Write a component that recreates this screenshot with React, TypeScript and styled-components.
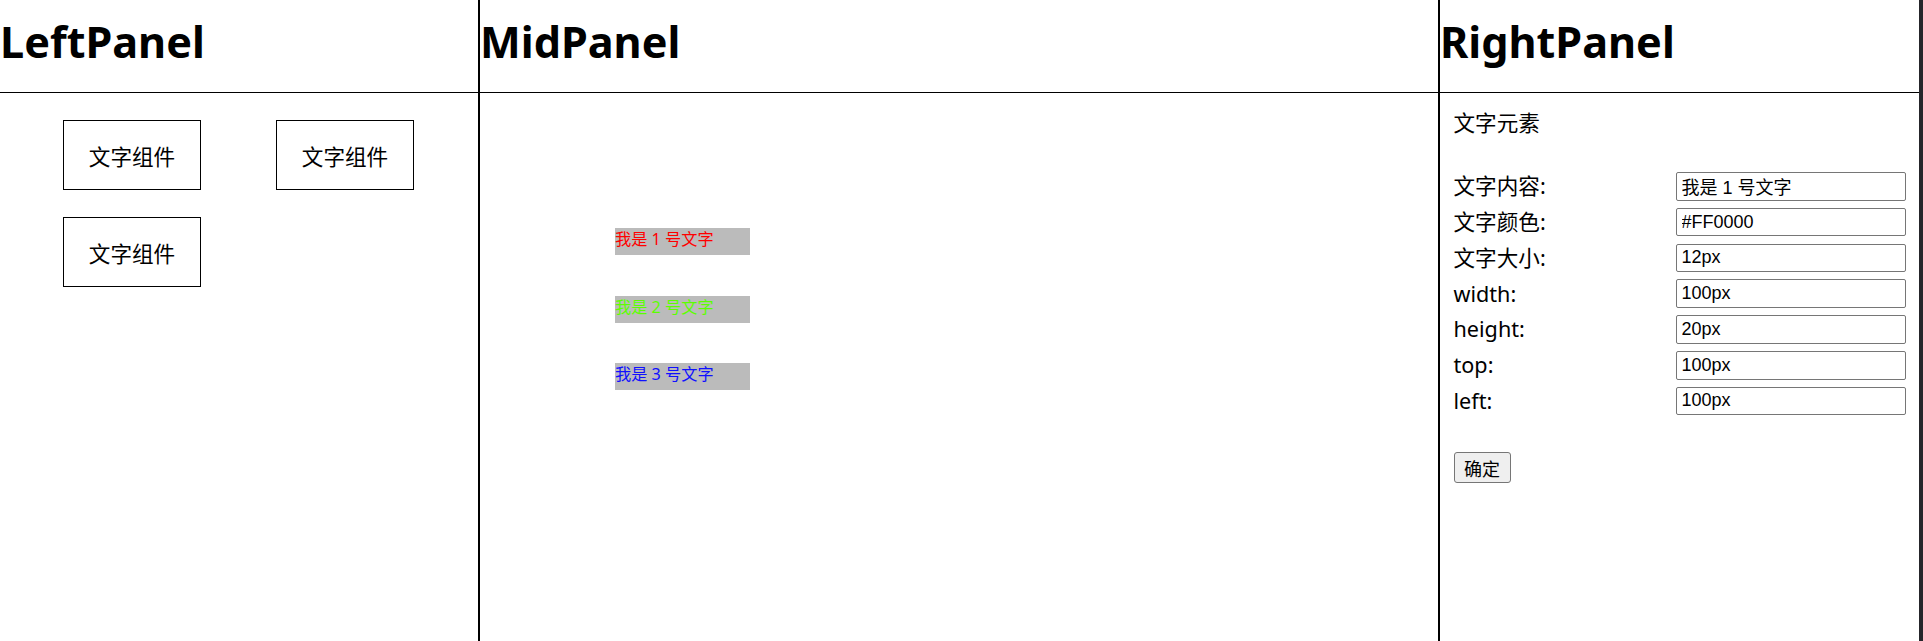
import React from "react";
import styled, { createGlobalStyle } from "styled-components";

const GlobalStyle = createGlobalStyle`
  html, body {
    margin: 0;
    padding: 0;
    background: #fff;
  }
  body {
    font-family: "Noto Sans", "Noto Sans CJK SC", sans-serif;
    color: #000;
  }
  * { box-sizing: border-box; }
`;

const Layout = styled.div`
  display: flex;
  width: 1923px;
  height: 641px;
  border-right: 4px solid #25252a;
  overflow: hidden;
`;

const Panel = styled.section<{ $width: number; $divider?: boolean }>`
  display: flex;
  flex-direction: column;
  width: ${(p) => p.$width}px;
  flex: none;
  border-right: ${(p) => (p.$divider ? "2px solid #000" : "none")};
`;

const Header = styled.header`
  height: 93px;
  border-bottom: 1px solid #000;
  flex: none;
`;

const Title = styled.h1`
  margin: 0;
  padding-top: 20px;
  font-family: "Noto Sans", "Noto Sans CJK SC", sans-serif;
  font-size: 43.2px;
  font-weight: 700;
  line-height: 1;
`;

const ComponentGrid = styled.div`
  display: grid;
  grid-template-columns: repeat(2, 138px);
  grid-auto-rows: 70px;
  column-gap: 75px;
  row-gap: 27px;
  padding: 27px 0 0 63px;
`;

const ComponentTile = styled.div`
  display: flex;
  align-items: center;
  justify-content: center;
  border: 1px solid #000;
  font-size: 21.6px;
  font-family: "Noto Sans CJK SC", sans-serif;
`;

const Canvas = styled.div`
  position: relative;
  flex: 1;
`;

const TextElement = styled.div<{ $color: string }>`
  position: absolute;
  width: 135px;
  height: 27px;
  background: #bbbbbb;
  color: ${(p) => p.$color};
  font-family: "Noto Sans", "Noto Sans CJK SC", sans-serif;
  font-size: 16.2px;
  line-height: 23px;
  white-space: nowrap;
  overflow: hidden;
`;

const Inspector = styled.div`
  padding: 13px 13.5px;
  display: flex;
  flex-direction: column;
`;

const InspectorTitle = styled.div`
  font-family: "Noto Sans CJK SC", sans-serif;
  font-size: 21.6px;
  line-height: 32px;
  margin-bottom: 34px;
`;

const Form = styled.div`
  display: grid;
  grid-template-columns: 1fr 230px;
  grid-auto-rows: 28.6px;
  row-gap: 7.2px;
  align-items: center;
`;

const Label = styled.label`
  font-family: "Noto Sans", "Noto Sans CJK SC", sans-serif;
  font-size: 21.6px;
  line-height: 28px;
`;

const Field = styled.input`
  height: 28.6px;
  width: 230px;
  border: 1px solid #767676;
  border-radius: 2px;
  padding: 0 5px;
  font-family: "Liberation Sans", "Noto Sans CJK SC", sans-serif;
  font-size: 18px;
  color: #000;
  background: #fff;
`;

const ConfirmButton = styled.button`
  align-self: flex-start;
  margin-top: 37px;
  width: 57px;
  height: 31px;
  padding: 0;
  border: 1px solid #767676;
  border-radius: 3px;
  background: #efefef;
  font-family: "Noto Sans CJK SC", sans-serif;
  font-size: 18px;
  color: #000;
`;

const elements = [
  { text: "我是 1 号文字", color: "#ff0000", top: 135, left: 135 },
  { text: "我是 2 号文字", color: "#5cff00", top: 202.5, left: 135 },
  { text: "我是 3 号文字", color: "#1010ff", top: 270, left: 135 },
];

const fields = [
  { label: "文字内容:", value: "我是 1 号文字" },
  { label: "文字颜色:", value: "#FF0000" },
  { label: "文字大小:", value: "12px" },
  { label: "width:", value: "100px" },
  { label: "height:", value: "20px" },
  { label: "top:", value: "100px" },
  { label: "left:", value: "100px" },
];

export default function App() {
  return (
    <>
      <GlobalStyle />
      <Layout>
        <Panel $width={480} $divider>
          <Header>
            <Title>LeftPanel</Title>
          </Header>
          <ComponentGrid>
            <ComponentTile>文字组件</ComponentTile>
            <ComponentTile>文字组件</ComponentTile>
            <ComponentTile>文字组件</ComponentTile>
          </ComponentGrid>
        </Panel>
        <Panel $width={960} $divider>
          <Header>
            <Title>MidPanel</Title>
          </Header>
          <Canvas>
            {elements.map((el) => (
              <TextElement
                key={el.text}
                $color={el.color}
                style={{ top: el.top, left: el.left }}
              >
                {el.text}
              </TextElement>
            ))}
          </Canvas>
        </Panel>
        <Panel $width={479}>
          <Header>
            <Title>RightPanel</Title>
          </Header>
          <Inspector>
            <InspectorTitle>文字元素</InspectorTitle>
            <Form>
              {fields.map((f) => (
                <React.Fragment key={f.label}>
                  <Label>{f.label}</Label>
                  <Field defaultValue={f.value} />
                </React.Fragment>
              ))}
            </Form>
            <ConfirmButton>确定</ConfirmButton>
          </Inspector>
        </Panel>
      </Layout>
    </>
  );
}
